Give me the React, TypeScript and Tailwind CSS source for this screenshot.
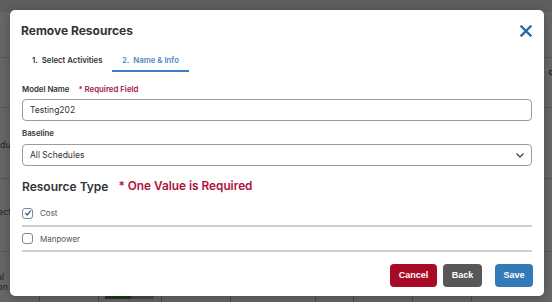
import React from "react";

function Check() {
  return (
    <svg width="8" height="8" viewBox="0 0 10 10" fill="none">
      <path d="M2 5.4 L4.1 7.5 L8.2 2.3" stroke="#2f5f99" strokeWidth="1.6" strokeLinecap="round" strokeLinejoin="round" />
    </svg>
  );
}

export default function App() {
  const font = { fontFamily: "Inter, 'Noto Sans', sans-serif" };
  const btnFont = { fontFamily: "'Liberation Sans', Arial, sans-serif" };
  return (
    <div className="relative w-[552px] h-[302px] overflow-hidden bg-[#666666]" style={font}>
      {/* dimmed background page */}
      <div className="flex flex-col h-full">
        <div className="h-[12px] bg-[#5e5e5e]" />
        <div className="h-[46px] border-b border-[#575757] relative">
          <span className="absolute right-[-2px] top-[53px] text-[9px] font-semibold text-[#222]">d</span>
        </div>
        <div className="h-[50px] border-b border-[#575757]" />
        <div className="h-[71px] border-b border-[#575757] relative">
          <span className="absolute left-0 top-[30px] text-[9px] text-[#222]">du</span>
        </div>
        <div className="h-[73px] border-b border-[#575757] relative">
          <span className="absolute left-[-2px] top-[28px] text-[9px] leading-[9px] text-[#222]">ect<br />.</span>
        </div>
        <div className="flex-1 relative">
          <span className="absolute left-[-3px] top-[20px] text-[9px] leading-[10px] text-[#222]">al<br />on</span>
          <div className="absolute bottom-0 left-0 right-0 h-[6px] flex">
            <div className="w-[40px] border-r border-[#4a4a4a]" />
            <div className="w-[59px] border-r border-[#4a4a4a]" />
            <div className="w-[63px] border-r border-[#4a4a4a] flex pl-[6px]">
              <div className="w-[26px] h-[3px] bg-[#1e3a1e]" />
              <div className="w-[23px] h-[3px] bg-[#4a4a4a]" />
            </div>
            <div className="w-[69px] border-r border-[#4a4a4a]" />
            <div className="w-[85px] border-r border-[#4a4a4a]" />
            <div className="w-[38px] border-r border-[#4a4a4a]" />
            <div className="w-[59px] border-r border-[#4a4a4a]" />
            <div className="w-[59px] border-r border-[#4a4a4a]" />
          </div>
        </div>
      </div>

      {/* modal */}
      <div className="absolute left-[10px] top-[10px] w-[534px] h-[286px] bg-white rounded-[5px] shadow-[0_2px_8px_rgba(0,0,0,0.25)] flex flex-col px-[12px]">
        <div className="flex items-center justify-between h-[42px]">
          <span className="text-[12px] font-bold text-[#333] ml-[-1px]">Remove Resources</span>
          <svg width="12" height="12" viewBox="0 0 12 12">
            <path d="M1.5 1.5 L10.5 10.5 M10.5 1.5 L1.5 10.5" stroke="#2c6aa0" strokeWidth="2.4" strokeLinecap="square" />
          </svg>
        </div>
        <div className="flex h-[20px] text-[7.8px] font-semibold">
          <div className="w-[90px] pl-[10px] pt-[3px] text-[#333]">1.&nbsp; Select Activities</div>
          <div className="w-[77px] pl-[10px] pt-[3px] text-[#4a88c4] border-b-[2px] border-[#3d7fc0]">2.&nbsp; Name &amp; Info</div>
        </div>
        <div className="flex items-center gap-[9px] mt-[12px] text-[7.8px] font-semibold h-[12px]">
          <span className="text-[#333]">Model Name</span>
          <span className="text-[#a3164a]">* Required Field</span>
        </div>
        <div className="mt-[3px] h-[22px] border border-[#9a9a9a] rounded-[4px] flex items-center px-[7px] text-[8.5px] text-[#333]">
          Testing202
        </div>
        <div className="mt-[8px] text-[7.8px] font-semibold text-[#333] h-[10px] flex items-center">Baseline</div>
        <div className="mt-[5px] h-[22px] border border-[#9a9a9a] rounded-[4px] flex items-center justify-between px-[7px] text-[8.5px] text-[#333]">
          <span>All Schedules</span>
          <svg width="10" height="7" viewBox="0 0 10 7" className="mr-[-1px]">
            <path d="M1.5 1.5 L5 5 L8.5 1.5" stroke="#444" strokeWidth="1.3" fill="none" />
          </svg>
        </div>
        <div className="flex items-center gap-[10px] mt-[11px] h-[20px]">
          <span className="text-[12px] font-semibold text-[#333]">Resource Type</span>
          <span className="text-[11.8px] font-semibold text-[#b0103a]">* One Value is Required</span>
        </div>
        <div className="mt-[4px] flex flex-col">
          <div className="h-[26px] flex items-center gap-[7px] border-b-[2px] border-[#cfcfcf]">
            <div className="w-[11px] h-[11px] rounded-[3px] border border-[#888] flex items-center justify-center">
              <Check />
            </div>
            <span className="text-[8px] text-[#555]">Cost</span>
          </div>
          <div className="h-[25px] flex items-center gap-[7px] border-b-[2px] border-[#cfcfcf]">
            <div className="w-[11px] h-[11px] rounded-[3px] border border-[#888]" />
            <span className="text-[8px] text-[#555]">Manpower</span>
          </div>
        </div>
        <div className="flex justify-end mt-[12px] mr-[-1px]">
          <button className="w-[47px] h-[23px] rounded-[4px] bg-[#a80a26] text-white text-[9px] font-bold" style={btnFont}>Cancel</button>
          <button className="ml-[6px] w-[39px] h-[23px] rounded-[4px] bg-[#575757] text-white text-[9px] font-bold" style={btnFont}>Back</button>
          <button className="ml-[13px] w-[38px] h-[23px] rounded-[4px] bg-[#337ab7] text-white text-[9px] font-bold" style={btnFont}>Save</button>
        </div>
      </div>
    </div>
  );
}
